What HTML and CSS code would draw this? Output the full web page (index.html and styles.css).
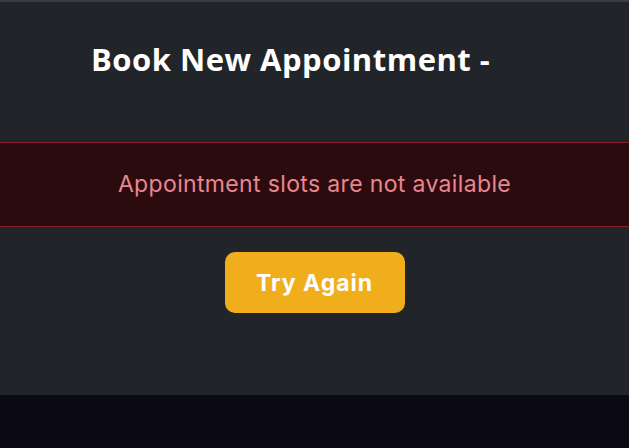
FILE: index.html
```html
<!DOCTYPE html>
<html lang="en">
<head>
    <meta charset="UTF-8">
    <meta name="viewport" content="width=device-width, initial-scale=1.0">
    <title>Book New Appointment</title>
    <link rel="stylesheet" href="styles.css">
</head>
<body>
    <div class="panel">
        <h2 class="title">Book New Appointment -</h2>

        <div class="alert">Appointment slots are not available</div>

        <div class="actions">
            <button type="button" class="retry">Try Again</button>
        </div>
    </div>
</body>
</html>
```

FILE: styles.css
```css
body, html {
    margin: 0;
    padding: 0;
    height: 100%;
    background-color: #0b0a14;
    font-family: Inter, "Open Sans", sans-serif;
}

.panel {
    background-color: #212529;
    border-top: 2px solid #3a3d42;
    height: 393px;
}

.title {
    margin: 0;
    padding: 38px 0 0 91px;
    height: 100px;
    box-sizing: border-box;
    font-family: "Open Sans", sans-serif;
    font-size: 31px;
    font-weight: 700;
    letter-spacing: 0.5px;
    color: #ffffff;
    line-height: 38px;
}

.alert {
    margin-top: 40px;
    background-color: #2c0b0e;
    border-top: 1px solid #842029;
    border-bottom: 1px solid #842029;
    color: #ea868f;
    font-family: Inter, sans-serif;
    font-size: 23px;
    letter-spacing: 0.35px;
    text-align: center;
    height: 83px;
    line-height: 83px;
}

.actions {
    display: flex;
    justify-content: center;
    padding-top: 25px;
}

.retry {
    width: 180px;
    height: 61px;
    border: none;
    border-radius: 10px;
    background-color: #f1ae1c;
    color: #ffffff;
    font-family: Inter, sans-serif;
    font-size: 23px;
    font-weight: 700;
    letter-spacing: 1px;
    cursor: pointer;
}
```
